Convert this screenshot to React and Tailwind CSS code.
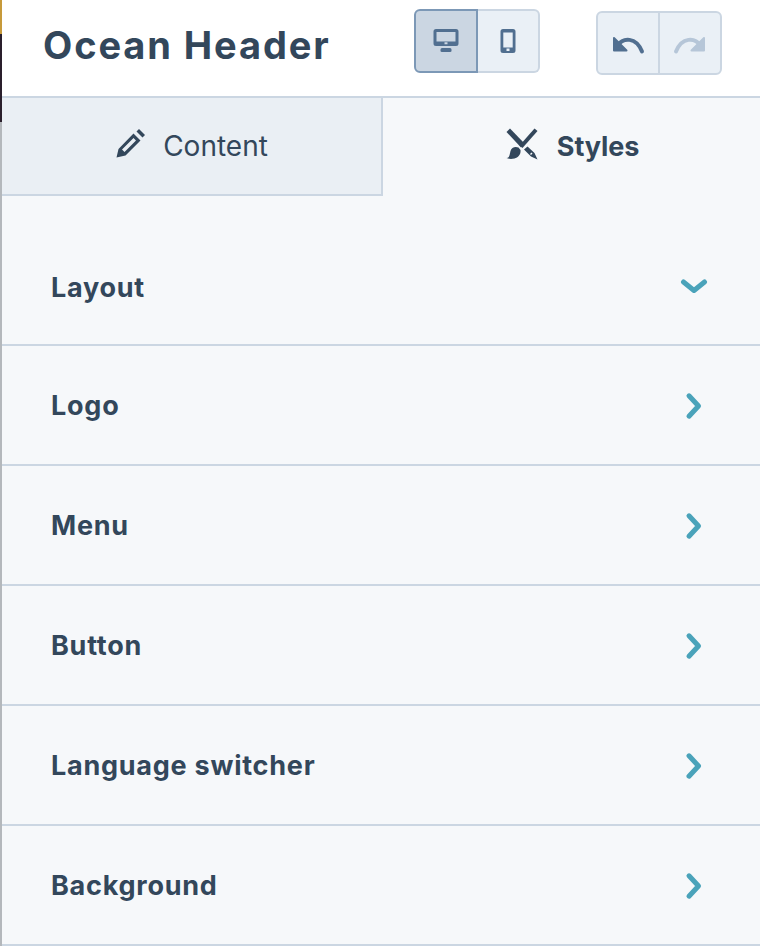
import React from "react";

function Chevron({ down }) {
  return (
    <svg width="28" height="28" viewBox="0 0 28 28" fill="none" stroke="#4aa3ba" strokeWidth="5" strokeLinecap="round" strokeLinejoin="round" className={down ? "" : "mt-[1px]"}>
      {down ? <path d="M3.500 9 L14 17.500 L24.500 9" /> : <path d="M9 3.800 L18.500 14 L9 24.200" />}
    </svg>
  );
}

function Row({ label, down }) {
  return (
    <div className={`flex items-center justify-between pl-[49px] pr-[52px] border-b-2 border-[#cbd6e2] ${down ? "h-[150px] pt-[34px]" : "h-[120px]"}`}>
      <span className={`text-[27px] font-bold text-[#33475b] tracking-[0.75px] ${down ? "mt-[2px]" : "mt-[3px]"}`}>{label}</span>
      <Chevron down={down} />
    </div>
  );
}

export default function App() {
  return (
    <div className="flex w-[760px] h-[946px] overflow-hidden bg-white font-['Inter',sans-serif]">
      <div className="w-[2px] flex flex-col shrink-0">
        <div className="h-[34px] bg-[#c79a3a]" />
        <div className="h-[88px] bg-[#2a1f2c]" />
        <div className="flex-1 bg-[#b4b8bc]" />
      </div>
      <div className="flex-1 flex flex-col min-w-0">
        <div className="h-[98px] shrink-0 border-b-2 border-[#cbd6e2] flex items-start pl-[41px]">
          <h1 className="w-[371px] shrink-0 pt-[20px] text-[38px] leading-[50px] font-bold text-[#33475b] tracking-[1.9px] whitespace-nowrap">Ocean Header</h1>
          <div className="mt-[9px] flex h-[64px] w-[126px]">
            <div className="w-[64px] h-[64px] bg-[#cbd6e2] border-2 border-[#7c98b6] rounded-l-md flex items-center justify-center">
              <svg width="26" height="26" viewBox="0 0 26 26" fill="#516f90">
                <path d="M3 1h20a2.500 2.500 0 0 1 2.500 2.500v12A2.500 2.500 0 0 1 23 18H3a2.500 2.500 0 0 1-2.500-2.500v-12A2.500 2.500 0 0 1 3 1Zm.5 3v9.500h19V4ZM11.500 14.200v2h3v-2ZM7.500 21.500q0-1.500 1.500-1.500h8q1.500 0 1.500 1.500v1.500q0 1-1.500 1H9q-1.500 0-1.500-1Z" fillRule="evenodd" />
              </svg>
            </div>
            <div className="flex-1 border-2 border-l-0 border-[#cbd6e2] rounded-r-md bg-[#eaf0f6] flex items-center justify-center">
              <svg width="16" height="26" viewBox="0 0 16 26" fill="#516f90">
                <path fillRule="evenodd" d="M3 1h10a2.500 2.500 0 0 1 2.500 2.500v19A2.500 2.500 0 0 1 13 25H3a2.500 2.500 0 0 1-2.500-2.500v-19A2.500 2.500 0 0 1 3 1Zm.3 3.500v15h9.400v-15ZM6.500 20.500v2.500h3v-2.500Z" />
              </svg>
            </div>
          </div>
          <div className="ml-[56px] mt-[11px] flex h-[64px] w-[126px] rounded-md overflow-hidden border-2 border-[#cbd6e2] bg-[#eaf0f6]">
            <div className="w-[62px] border-r-2 border-[#cbd6e2] flex items-center justify-center">
              <svg width="34" height="20" viewBox="0 0 34 20" fill="none" className="mt-[3px]">
                <path d="M3 3v12.500h12.500z" fill="#516f90" stroke="#516f90" strokeWidth="2" strokeLinejoin="round" />
                <path d="M6.500 10.500C12 2.500 25 1.500 31 16.500" stroke="#516f90" strokeWidth="4" strokeLinecap="round" />
              </svg>
            </div>
            <div className="flex-1 flex items-center justify-center">
              <svg width="34" height="20" viewBox="0 0 34 20" fill="none" className="mt-[3px]">
                <path d="M31 3v12.500H18.500z" fill="#b6c6d8" stroke="#b6c6d8" strokeWidth="2" strokeLinejoin="round" />
                <path d="M27.500 10.500C22 2.500 9 1.500 3 16.500" stroke="#b6c6d8" strokeWidth="4" strokeLinecap="round" />
              </svg>
            </div>
          </div>
        </div>
        <div className="flex-1 bg-[#f6f8fa] flex flex-col">
          <div className="flex h-[98px] shrink-0">
            <div className="w-[381px] h-[98px] bg-[#eaeff4] border-b-2 border-r-2 border-[#cbd6e2] flex items-center justify-center gap-[18px] pl-[1px] text-[#33475b]">
              <svg width="29" height="29" viewBox="0 0 29 29" className="mb-[6px]">
                <path fill="#33475b" fillRule="evenodd" d="M0.500 28.500 2.500 20 17.500 4.500l7 7L9.500 26.500zM6 20.500l2.500 2.500 11.500-11.500-2.500-2.500z" />
                <path fill="#33475b" d="M20.500 2.500 23 0l6 6-2.500 2.500z" />
              </svg>
              <span className="text-[28px]">Content</span>
            </div>
            <div className="flex-1 flex items-center justify-center gap-[19px] pl-[2px] text-[#33475b]">
              <svg width="32" height="32" viewBox="0 0 32 32" fill="#33475b" className="mb-[6px]">
                <path d="M0.500 4 4 0.500 18.500 15.500 15 19.500z" />
                <path d="M28.500 0.500 31.500 3 16.500 20l-3-2.500z" />
                <path d="M0.500 30c3 0 3-3 4-7 1-3.500 4.500-5 8-3.500l2 2.500c.5 4.500-2 7.500-6 8.500-3 .700-6 .500-8-.500z" />
                <path d="M18 21.500l3.500-3 7 6.500 3 6.500-6.500-3zM25 27l1.500-1.500-1-1-1.500 1.500z" fillRule="evenodd" />
              </svg>
              <span className="text-[27px] font-bold tracking-[-0.1px]">Styles</span>
            </div>
          </div>
          <Row label="Layout" down />
          <Row label="Logo" />
          <Row label="Menu" />
          <Row label="Button" />
          <Row label="Language switcher" />
          <Row label="Background" />
        </div>
      </div>
    </div>
  );
}
